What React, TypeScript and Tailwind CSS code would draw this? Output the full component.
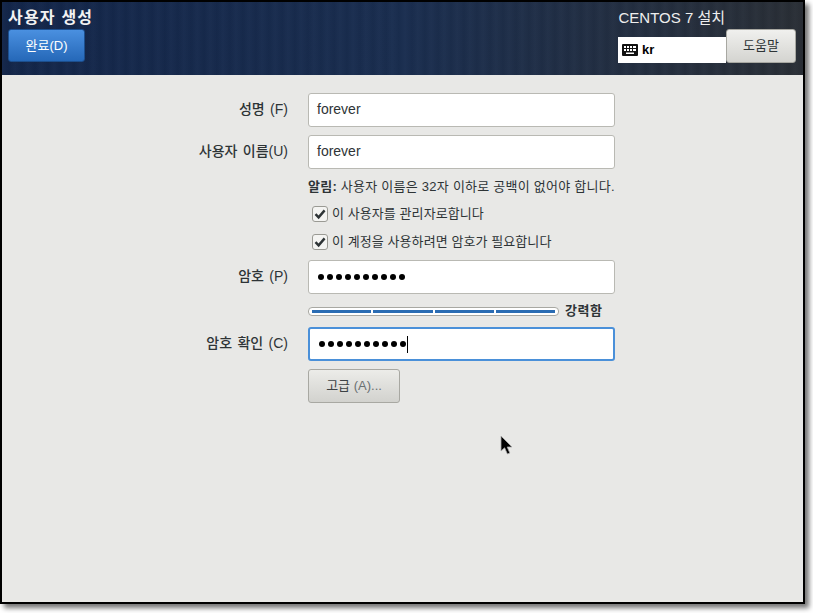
import React from "react";

const font = { fontFamily: '"Liberation Sans", "Noto Sans CJK KR", sans-serif' };

function Label({ children }: { children: React.ReactNode }) {
  return <div className="flex items-center justify-end pb-[1px] text-[14px] font-medium text-[#2e3436] [word-spacing:1.5px]">{children}</div>;
}

function Field({ children, focused }: { children: React.ReactNode; focused?: boolean }) {
  return (
    <div
      className={
        focused
          ? "h-[34px] w-[307px] rounded-[3px] border-2 border-[#4a90d9] bg-white pl-[8px] flex items-center text-[14px] text-[#2e3436]"
          : "h-[34px] w-[307px] rounded-[3px] border border-[#b9b9b3] bg-white pl-[8px] flex items-center text-[14px] text-[#2e3436]"
      }
    >
      {children}
    </div>
  );
}

function Dots() {
  return (
    <span className="ml-[1px] flex gap-[3px]">
      {Array.from({ length: 10 }).map((_, i) => (
        <span key={i} className="block h-[6px] w-[6px] rounded-full bg-black" />
      ))}
    </span>
  );
}

function Check({ children }: { children: React.ReactNode }) {
  return (
    <div className="ml-[4px] flex h-[28px] items-center gap-[4px] text-[13px] tracking-[0.08px] text-[#2e3436]">
      <span className="flex h-[16px] w-[16px] items-center justify-center rounded-[3px] border border-[#9a9a94] bg-[#f4f4f2]">
        <svg width="12" height="12" viewBox="0 0 12 12">
          <path d="M1.5 6.2 L4.6 9.4 L10.6 2.4" fill="none" stroke="#2e3436" strokeWidth="2.4" />
        </svg>
      </span>
      <span>{children}</span>
    </div>
  );
}

export default function App() {
  return (
    <div className="h-[613px] w-[813px] bg-white" style={font}>
      <div className="relative flex h-[604px] w-[805px] flex-col border-2 border-black bg-[#e8e8e6] shadow-[4px_4px_5px_rgba(0,0,0,0.55)]">
        <header className="flex h-[73px] justify-between bg-[repeating-linear-gradient(90deg,rgba(255,255,255,0.015)_0px,rgba(0,0,0,0.04)_7px,rgba(255,255,255,0.015)_13px),linear-gradient(90deg,#13264a,#1a2e50_50%,#2a2f36)] pl-[6px] pr-[7px]">
          <div>
            <div className="mt-[4px] h-[23px] text-[16px] font-bold leading-[23px] tracking-[1.2px] text-[#f2f2f2] whitespace-nowrap">사용자 생성</div>
            <button className="flex h-[33px] w-[77px] items-center justify-center rounded-[3px] border border-[#1c4f8e] bg-gradient-to-b from-[#4a90e0] to-[#2568b8] text-[13px] text-white">
              완료(D)
            </button>
          </div>
          <div className="flex flex-col items-end">
            <div className="mr-[71px] mt-[5px] h-[22px] text-[15px] leading-[22px] text-[#eeeeee]">CENTOS 7 설치</div>
            <div className="flex items-end">
              <div className="flex h-[26px] w-[108px] items-center gap-[4px] bg-white pl-[4px] text-[13px] font-bold text-black">
                <svg width="16" height="12" viewBox="0 0 16 12">
                  <rect x="0" y="0" width="16" height="12" rx="1" fill="#111" />
                  <path d="M2 2h2v2H2zM5 2h2v2H5zM8 2h2v2H8zM11 2h3v2h-3zM2 5h2v2H2zM5 5h2v2H5zM8 5h2v2H8zM11 5h3v2h-3zM4 8.5h8v1.5H4z" fill="#fff" />
                </svg>
                <span>kr</span>
              </div>
              <button className="flex h-[34px] w-[70px] items-center justify-center rounded-[3px] border border-[#a8a8a2] bg-gradient-to-b from-[#f0f0ee] to-[#d4d4d0] text-[13px] text-[#2e3436]">
                도움말
              </button>
            </div>
          </div>
        </header>

        <main className="grid grid-cols-[286px_307px] content-start gap-x-[20px] pt-[18px]">
          <Label>성명 (F)</Label>
          <Field><span className="-mt-[1px]">forever</span></Field>
          <div className="col-span-2 h-[8px]" />
          <Label>사용자 이름(U)</Label>
          <Field><span className="-mt-[1px]">forever</span></Field>
          <div />
          <div className="mt-[8px] h-[23px] whitespace-nowrap text-[13px] leading-[20px] tracking-[0.25px] text-[#2e3436]">
            <b>알림:</b> 사용자 이름은 32자 이하로 공백이 없어야 합니다.
          </div>
          <div />
          <Check>이 사용자를 관리자로합니다</Check>
          <div />
          <Check>이 계정을 사용하려면 암호가 필요합니다</Check>
          <div className="col-span-2 h-[4px]" />
          <Label>암호 (P)</Label>
          <Field><Dots /></Field>
          <div />
          <div className="relative mt-[13px] mb-[11px] flex h-[9px] w-[251px] gap-[2px] rounded-[4px] border border-[#a8a8a2] bg-white px-[3px] py-[2px]">
            <span className="flex-1 bg-[#2a6cb3]" />
            <span className="flex-1 bg-[#2a6cb3]" />
            <span className="flex-1 bg-[#2a6cb3]" />
            <span className="flex-1 bg-[#2a6cb3]" />
            <span className="absolute left-[256px] top-[-7px] whitespace-nowrap text-[13px] font-bold tracking-[0.5px] text-[#2e3436]">강력함</span>
          </div>
          <Label>암호 확인 (C)</Label>
          <Field focused>
            <Dots />
            <span className="ml-[1px] h-[17px] w-[1px] bg-black" />
          </Field>
          <div className="col-span-2 h-[8px]" />
          <div />
          <button className="flex h-[34px] w-[92px] items-center justify-center rounded-[3px] border border-[#a8a8a2] bg-gradient-to-b from-[#ecece9] to-[#d2d2ce] text-[13px] text-[#3c4244]">
            고급&nbsp;<span className="text-[#6a7072]">(A)...</span>
          </button>
        </main>

        <svg className="absolute left-[498px] top-[433px]" width="14" height="21" viewBox="0 0 14 21">
          <path d="M1 1 V16 L4.6 12.8 L7.4 19 L9.8 18 L7.2 12 H12 Z" fill="#000" stroke="#aaa" strokeWidth="0.8" />
        </svg>
      </div>
    </div>
  );
}
